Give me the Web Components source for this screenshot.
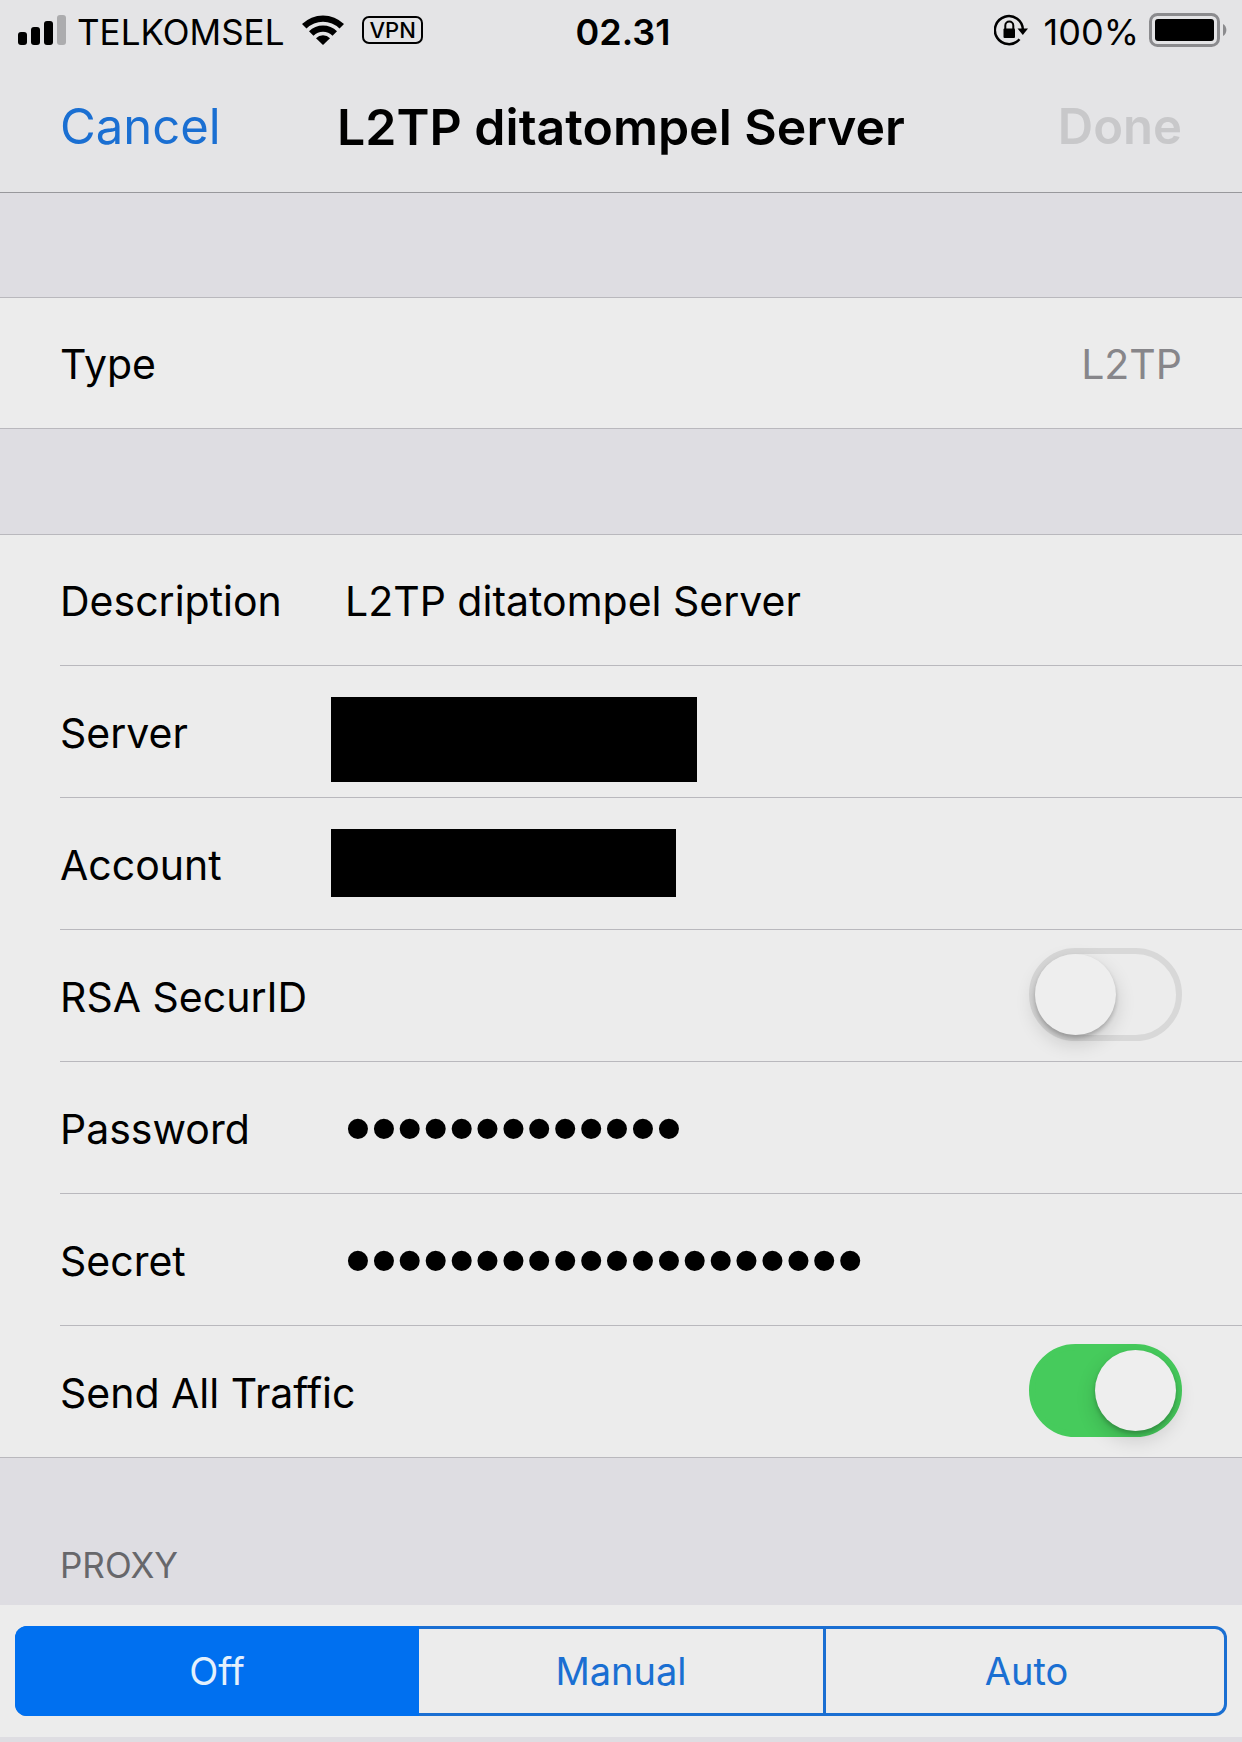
<!DOCTYPE html>
<html lang="id">
<head>
<meta charset="utf-8">
<meta name="viewport" content="width=device-width, initial-scale=1">
<title>L2TP ditatompel Server</title>
<style>
  :root {
    --page: #dedde2;
    --bar: #e4e4e6;
    --cell: #ececec;
    --line: #b9b8bd;
    --tint: #1a6fd2;
    --tint-fill: #0070f0;
    --gutter: 60px;
  }
  body {
    margin: 0;
    min-height: 100vh;
    background: var(--page);
    color: #000;
    font-family: Inter, "Liberation Sans", sans-serif;
    font-size: 41px;
    line-height: 52px;
  }
</style>
</head>
<body>
<vpn-screen></vpn-screen>
<script>
const define = (name, html, setup) => {
  const template = document.createElement('template');
  template.innerHTML = html;
  customElements.define(name, class extends HTMLElement {
    constructor() {
      super();
      this.attachShadow({ mode: 'open' }).append(template.content.cloneNode(true));
    }
    connectedCallback() {
      if (setup) setup(this, this.shadowRoot);
    }
  });
};

define('status-bar', `
  <style>
    :host { display: grid; grid-template-columns: 1fr auto 1fr; align-items: center;
            height: 57px; padding: 3px 14px 0 18px; font-size: 36px; line-height: 42px; }
    div { display: flex; align-items: center; }
    .right { justify-content: flex-end; }
    .carrier { font-size: 35px; }
    svg, .vpn { flex: none; margin-bottom: 3px; }
    .bars { margin-right: 10px; }
    .wifi { margin-left: 18px; margin-right: 18px; }
    .vpn { box-sizing: border-box; height: 28px; padding: 0 5px; border: 2px solid #000; border-radius: 7px;
           font-size: 22px; line-height: 24px; font-weight: 500; }
    .lock { margin-right: 16px; }
    .battery { margin-left: 10px; }
    time { font-weight: 600; }
  </style>
  <div>
    <svg class="bars" width="49" height="30" viewBox="0 0 49 30" role="img" aria-label="Signal">
      <rect y="17" width="9" height="13" rx="3"/><rect x="13" y="12" width="9" height="18" rx="3"/>
      <rect x="26" y="6" width="9" height="24" rx="3"/><rect x="39" width="9" height="30" rx="3" fill="#acacae"/>
    </svg>
    <span class="carrier">TELKOMSEL</span>
    <svg class="wifi" width="42" height="30" viewBox="0 0 42 30" role="img" aria-label="Wi-Fi">
      <path d="M0 9 A30 30 0 0 1 42 9 L37.500 13.500 A23.500 23.500 0 0 0 4.500 13.500 Z"/>
      <path d="M7 16.200 A20 20 0 0 1 35 16.200 L30.500 20.700 A13.500 13.500 0 0 0 11.500 20.700 Z"/>
      <path d="M14 23.200 A10 10 0 0 1 28 23.200 L21 30 Z"/>
    </svg>
    <span class="vpn">VPN</span>
  </div>
  <time>02.31</time>
  <div class="right">
    <svg class="lock" width="34" height="32" viewBox="0 0 34 32" role="img" aria-label="Rotation lock">
      <path d="M28.900 16 A14 14 0 1 0 25.500 25.300" fill="none" stroke="#000" stroke-width="2.500"/>
      <path d="M23.500 14.500 H34 L28.800 21 Z"/>
      <rect x="9.500" y="14.500" width="11.500" height="9.500" rx="1"/>
      <path d="M11.300 15 V11.500 A4 4 0 0 1 19.300 11.500 V15" fill="none" stroke="#000" stroke-width="2"/>
    </svg>
    <span>100%</span>
    <svg class="battery" width="79" height="34" viewBox="0 0 79 34" role="img" aria-label="Battery">
      <rect x="1.500" y="1.500" width="68" height="31" rx="7" fill="none" stroke="#8b8b8e" stroke-width="3"/>
      <rect x="6" y="6" width="59" height="22" rx="3"/>
      <path d="M74 11 A7 7 0 0 1 74 23 Z" fill="#8b8b8e"/>
    </svg>
  </div>`);

define('nav-bar', `
  <style>
    :host { box-sizing: border-box; display: grid; grid-template-columns: 1fr auto 1fr; align-items: center;
            height: 132px; padding: 2px var(--gutter) 0; }
    h1 { margin: 0; font-size: 50px; line-height: 60px; font-weight: 600; }
    button { appearance: none; border: 0; padding: 0; background: none; font: inherit;
             font-size: 49px; line-height: 60px; color: var(--tint); justify-self: start; }
    button:disabled { justify-self: end; color: #c8c8ca; font-weight: 600; }
  </style>
  <button type="button">Cancel</button>
  <h1><slot></slot></h1>
  <button type="button" disabled>Done</button>`);

define('form-group', `
  <style>
    :host { display: block; background: var(--cell); box-shadow: inset 0 1px var(--line), inset 0 -1px var(--line); }
  </style>
  <slot></slot>`);

const rowStyle = `
    :host { display: block; padding-left: var(--gutter); }
    .row { box-sizing: border-box; display: flex; align-items: center; height: 132px;
           padding: 2px var(--gutter) 0 0; border-bottom: 1px solid var(--line); }
    :host(:last-child) .row { border-color: transparent; }
    .name { flex: none; width: 285px; white-space: nowrap; }`;

define('value-row', `
  <style>${rowStyle}
    .row { justify-content: space-between; }
    .value { color: #87868a; }
  </style>
  <div class="row"><span class="name"><slot></slot></span><span class="value"><slot name="value"></slot></span></div>`);

define('text-row', `
  <style>${rowStyle}
    input { flex: 1; min-width: 0; height: 90px; border: 0; padding: 0; outline: 0; background: none;
            font: inherit; color: inherit; }
    input[type="password"] { font-family: "Liberation Sans", Arial, sans-serif; font-size: 74px; }
    :host([redacted]) input { flex: none; align-self: flex-start; width: var(--mask-width); height: var(--mask-height);
            margin: 29px 0 0 -14px; background: #000; }
  </style>
  <div class="row"><label class="name" for="field"><slot></slot></label><input id="field"></div>`,
  (host, root) => {
    const input = root.querySelector('input');
    input.type = host.getAttribute('type') || 'text';
    input.value = host.getAttribute('value') || '';
  });

define('switch-row', `
  <style>${rowStyle}
    .row { justify-content: space-between; padding-top: 0; }
    .name { padding-top: 2px; }
    input { appearance: none; box-sizing: border-box; flex: none; display: flex; align-items: center;
            width: 153px; height: 93px; margin: 0 0 2px; border: 6px solid #d8d8d8; border-radius: 47px; background: var(--cell); }
    input::before { content: ""; width: 81px; height: 81px; border-radius: 50%; background: #eee;
            box-shadow: 0 8px 20px rgba(0,0,0,.16), 0 3px 4px rgba(0,0,0,.2); }
    input:checked { justify-content: flex-end; border-color: #46cb5c; background: #46cb5c; }
  </style>
  <div class="row"><label class="name" for="switch"><slot></slot></label><input id="switch" type="checkbox" role="switch"></div>`,
  (host, root) => { root.querySelector('input').checked = host.hasAttribute('on'); });

define('proxy-picker', `
  <style>
    :host { display: block; }
    fieldset { margin: 0; padding: 0; border: 0; min-width: 0; }
    legend { padding: 86px var(--gutter) 19px; font-size: 35px; line-height: 42px; color: #67676b; }
    .cell { padding: 21px 15px; background: var(--cell); }
    .control { display: grid; grid-template-columns: repeat(3, 1fr); border-radius: 12px; overflow: hidden;
               box-shadow: inset 0 0 0 3px var(--tint); }
    label { box-sizing: border-box; position: relative; display: grid; place-items: center; height: 90px;
            font-size: 38px; color: var(--tint); }
    label + label { border-left: 3px solid var(--tint); }
    label:has(:checked) { background: var(--tint-fill); color: #e4f0fc; }
    label:has(:checked) + label { border-left: 0; }
    input { position: absolute; inset: 0; margin: 0; opacity: 0; }
  </style>
  <fieldset>
    <legend>PROXY</legend>
    <div class="cell"><div class="control">
      <label><input type="radio" name="proxy" checked>Off</label>
      <label><input type="radio" name="proxy">Manual</label>
      <label><input type="radio" name="proxy">Auto</label>
    </div></div>
  </fieldset>`);

define('vpn-screen', `
  <style>
    :host { display: block; }
    header { background: var(--bar); border-bottom: 1px solid #98989c; }
    form { display: flex; flex-direction: column; padding-top: 104px; }
    form-group + form-group { margin-top: 105px; }
    .server { --mask-width: 366px; --mask-height: 85px; }
    .account { --mask-width: 345px; --mask-height: 68px; }
  </style>
  <header>
    <status-bar></status-bar>
    <nav-bar>L2TP ditatompel Server</nav-bar>
  </header>
  <form>
    <form-group>
      <value-row>Type<span slot="value">L2TP</span></value-row>
    </form-group>
    <form-group>
      <text-row value="L2TP ditatompel Server">Description</text-row>
      <text-row class="server" redacted>Server</text-row>
      <text-row class="account" redacted>Account</text-row>
      <switch-row>RSA SecurID</switch-row>
      <text-row type="password" value="0000000000000">Password</text-row>
      <text-row type="password" value="00000000000000000000">Secret</text-row>
      <switch-row on>Send All Traffic</switch-row>
    </form-group>
    <proxy-picker></proxy-picker>
  </form>`);
</script>
</body>
</html>
